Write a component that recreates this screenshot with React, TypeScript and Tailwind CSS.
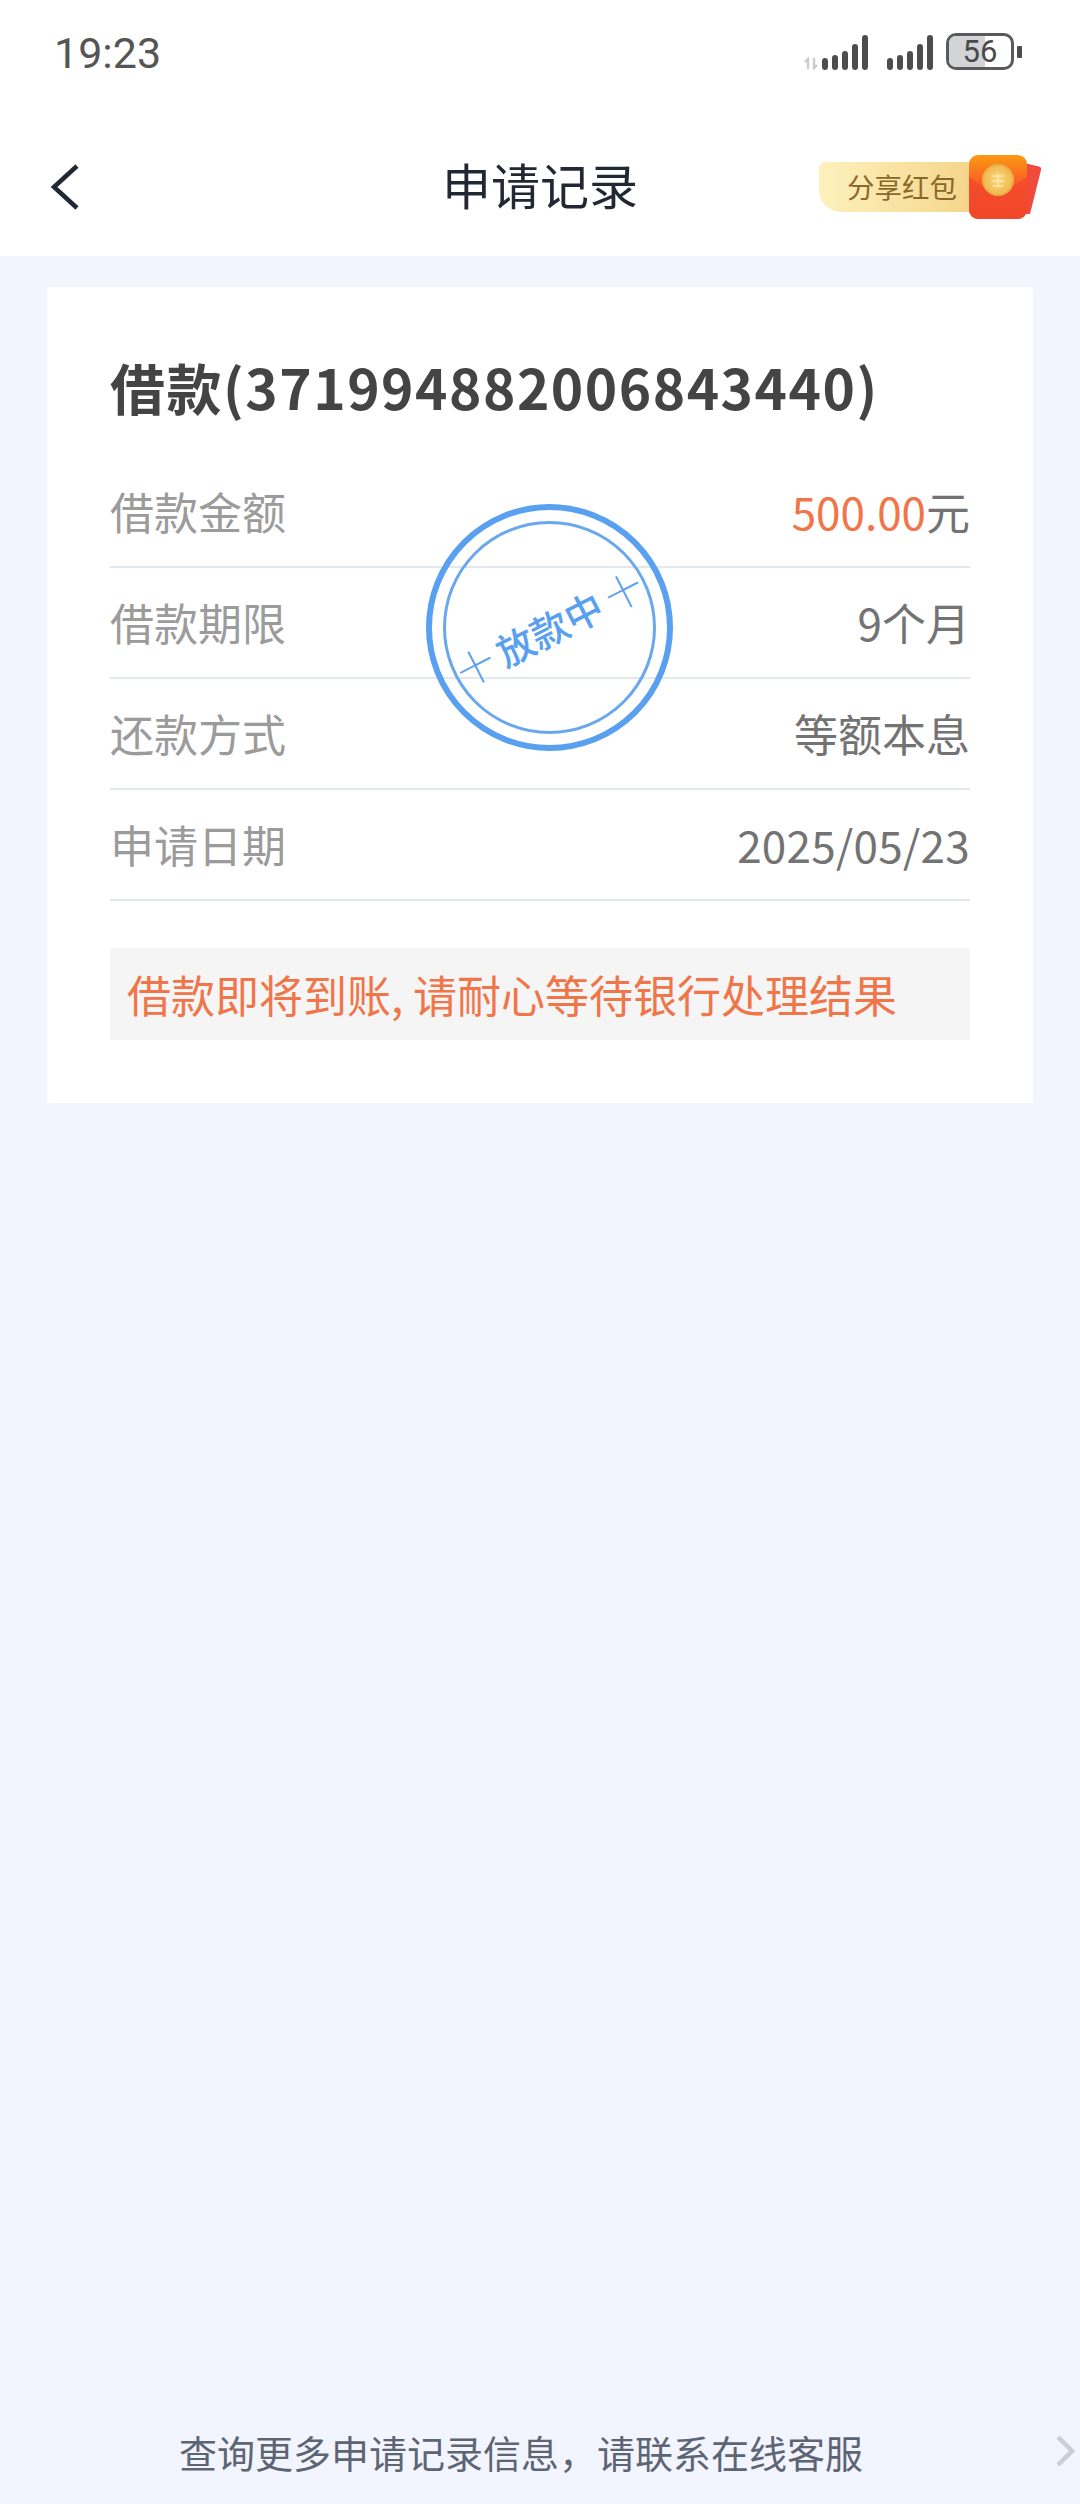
const FONT = "font-['Noto_Sans_CJK_SC','Noto_Sans',sans-serif]";

const rows = [
  { label: "借款金额", value: "500.00", unit: "元" },
  { label: "借款期限", value: "9个月" },
  { label: "还款方式", value: "等额本息" },
  { label: "申请日期", value: "2025/05/23", wide: true },
];

function SignalBars({ heights }: { heights: number[] }) {
  return (
    <div className="flex items-end gap-[4px]">
      {heights.map((h, i) => (
        <div key={i} className="w-[6px] rounded-full bg-[#4d4d4d]" style={{ height: h }} />
      ))}
    </div>
  );
}

function StatusBar() {
  return (
    <div className="flex h-[104px] items-start justify-between pl-[54px] pr-[58px]">
      <span className="mt-[28px] font-['Roboto',sans-serif] text-[43px] leading-[50px] text-[#555555]">19:23</span>
      <div className="mt-[33px] flex items-end">
        <svg width="16" height="13" viewBox="0 0 16 13" className="mr-[3px]">
          <path d="M5 12V2L2 5M11 1v10l3-3" fill="none" stroke="#cccccc" strokeWidth="2.4" />
        </svg>
        <SignalBars heights={[12, 15, 19, 26, 35]} />
        <div className="ml-[19px]">
          <SignalBars heights={[12, 15, 19, 26, 35]} />
        </div>
        <div className="ml-[13px] flex items-center">
          <div className="relative flex h-[37px] w-[68px] items-center justify-center overflow-hidden rounded-[10px] border-[3px] border-[#5a5a5a]">
            <div className="absolute inset-y-0 left-0 w-[36px] bg-[#d3d4d7]" />
            <span className="relative font-['Roboto',sans-serif] text-[31px] leading-none text-[#4a4a4a]">56</span>
          </div>
          <div className="ml-[3px] h-[12px] w-[5px] rounded-[1px] bg-[#4d4d4d]" />
        </div>
      </div>
    </div>
  );
}

function RedPacket() {
  return (
    <svg width="74" height="66" viewBox="0 0 74 66" className="-ml-[1px]">
      <defs>
        <linearGradient id="pkt" x1="0" y1="0" x2="0" y2="1">
          <stop offset="0" stopColor="#fc9a12" />
          <stop offset="0.5" stopColor="#f9552a" />
          <stop offset="1" stopColor="#f1452b" />
        </linearGradient>
        <radialGradient id="coin">
          <stop offset="0" stopColor="#fbd77e" />
          <stop offset="1" stopColor="#f1b94f" />
        </radialGradient>
      </defs>
      <path d="M56 9l15 3.500a3 3 0 0 1 2 3.500L62 60H50z" fill="#ef4a3c" />
      <rect x="1" y="1" width="58" height="64" rx="9" fill="url(#pkt)" />
      <path d="M1 23c9 7 19 13 29 13s20-6 29-13v33a9 9 0 0 1-9 9H10a9 9 0 0 1-9-9z" fill="#f2482b" opacity="0.75" />
      <circle cx="30" cy="26" r="15" fill="url(#coin)" stroke="#ecb04a" strokeWidth="2" />
      <path d="M24 22h12M24 27h12M30 19v14M25 32h10" stroke="#fbe7ad" strokeWidth="1.500" fill="none" />
    </svg>
  );
}

function NavBar() {
  return (
    <div className="grid h-[152px] grid-cols-[1fr_auto_1fr] items-center pt-[14px]">
      <div className="pl-[50px]">
        <svg width="30" height="48" viewBox="0 0 30 48" className="block">
          <path d="M27 3L4 24l23 21" fill="none" stroke="#222833" strokeWidth="4.500" />
        </svg>
      </div>
      <h1 className="mb-[6px] text-center text-[49px] leading-[72px] text-[#222833]">申请记录</h1>
      <div className="flex items-start justify-end pr-[38px]">
        <div className="mt-[8px] flex h-[50px] w-[150px] items-center rounded-tl-[6px] rounded-bl-[22px] bg-gradient-to-r from-[#fdf1bd] to-[#f5d68b] pl-[28px]">
          <span className="text-[27.500px] leading-none text-[#8a672c]">分享红包</span>
        </div>
        <RedPacket />
      </div>
    </div>
  );
}

function Stamp() {
  return (
    <div className="absolute left-[379px] top-[217px] flex size-[247px] items-center justify-center rounded-full border-[6px] border-[#5aa0f0]">
      <div className="flex size-[213px] items-center justify-center rounded-full border-[3px] border-[#6aa8ee]">
        <div className="flex -rotate-[27deg] items-center gap-[7px] whitespace-nowrap text-[38px] leading-none text-[#5aa0f0]">
          <span className="font-light">十</span>
          <span className="font-medium">放款中</span>
          <span className="font-light">十</span>
        </div>
      </div>
    </div>
  );
}

export default function App() {
  return (
    <div className={`flex h-[2504px] w-[1080px] flex-col overflow-hidden bg-[#f2f5fd] ${FONT}`}>
      <div className="bg-white">
        <StatusBar />
        <NavBar />
      </div>

      <div className="relative mx-[47px] mt-[31px] bg-white px-[63px] pb-[63px] pt-[33px]">
        <div className="flex h-[137px] items-center pb-[4px] text-[55px] font-bold tracking-[1.5px] text-[#444444]">借款(371994882006843440)</div>
        {rows.map((row) => (
          <div key={row.label} className="flex h-[111px] items-center justify-between border-b-2 border-[#e1e8ee] pb-[2px] text-[44px]">
            <span className="text-[#9b9b9b]">{row.label}</span>
            <span className={`${row.wide ? "tracking-[0.3px]" : ""} ${row.unit ? "text-[#f07549]" : "text-[#737373]"}`}>
              {row.value}
              {row.unit && <span className="text-[#737373]">{row.unit}</span>}
            </span>
          </div>
        ))}
        <div className="mt-[47px] flex h-[92px] items-center bg-[#f5f5f6] pl-[17px] text-[44px] text-[#f07549]">
          借款即将到账, 请耐心等待银行处理结果
        </div>
        <Stamp />
      </div>

      <div className="mt-auto flex h-[102px] items-center pb-[4px] pl-[179px] pr-[5px]">
        <span className="text-[38px] text-[#5d6575]">查询更多申请记录信息，请联系在线客服</span>
        <svg width="20" height="34" viewBox="0 0 20 34" className="ml-auto">
          <path d="M3 3l14 14L3 31" fill="none" stroke="#cbced4" strokeWidth="4.500" />
        </svg>
      </div>
    </div>
  );
}
